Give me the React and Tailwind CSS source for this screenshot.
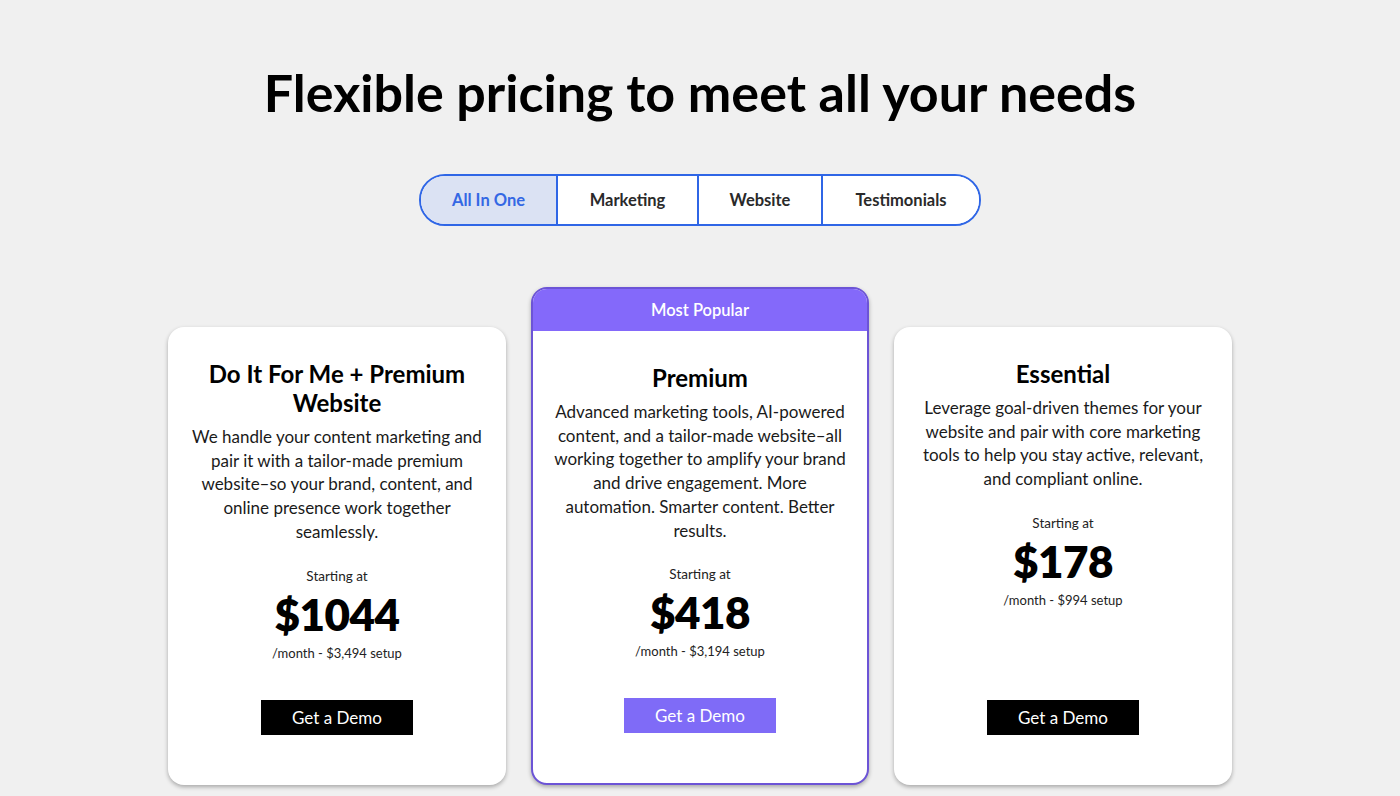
import React, { useState } from 'react';

const tabs = ['All In One', 'Marketing', 'Website', 'Testimonials'];

const plans = [
  {
    name: 'Do It For Me + Premium Website',
    desc: 'We handle your content marketing and pair it with a tailor-made premium website\u2013so your brand, content, and online presence work together seamlessly.',
    price: '$1044',
    setup: '/month - $3,494 setup',
  },
  {
    name: 'Premium',
    desc: 'Advanced marketing tools, AI-powered content, and a tailor-made website\u2013all working together to amplify your brand and drive engagement. More automation. Smarter content. Better results.',
    price: '$418',
    setup: '/month - $3,194 setup',
    popular: true,
  },
  {
    name: 'Essential',
    desc: 'Leverage goal-driven themes for your website and pair with core marketing tools to help you stay active, relevant, and compliant online.',
    price: '$178',
    setup: '/month - $994 setup',
  },
];

const widths = ['w-[135px]', 'w-[141px]', 'w-[124px]', 'w-[158px]'];

const CardBody = ({ plan }) => (
  <div className="flex flex-col items-center h-full px-5 pt-[32px] pb-[50px] text-center">
    <h3 className="text-[24px] leading-[29px] font-bold text-black">{plan.name}</h3>
    <p className="mt-[8px] text-[17px] leading-[23.7px] text-[#1a1a1a]">{plan.desc}</p>
    <div className="mt-[24px] text-[13.5px] leading-[16px] text-[#222]">Starting at</div>
    <div className="mt-[5px] text-[44px] leading-[50px] font-extrabold text-black tracking-[-0.5px]">{plan.price}</div>
    <div className="mt-[6px] text-[13px] leading-[16px] text-[#222]">{plan.setup}</div>
    <button
      className={`mt-auto w-[152px] h-[35px] text-[17px] text-white ${
        plan.popular ? 'bg-[#7f6bf7]' : 'bg-black'
      }`}
    >
      Get a Demo
    </button>
  </div>
);

const App = () => {
  const [active, setActive] = useState('All In One');

  return (
    <div className="min-h-screen bg-[#f0f0f0] font-['Lato',sans-serif] flex flex-col items-center overflow-hidden">
      <h1 className="mt-[63px] text-[52px] leading-[58px] font-bold text-black">
        Flexible pricing to meet all your needs
      </h1>

      <div className="mt-[53px] flex h-[52px] border-2 border-[#2f66e6] rounded-full overflow-hidden bg-white">
        {tabs.map((t, i) => (
          <button
            key={t}
            onClick={() => setActive(t)}
            className={`${widths[i]} h-full text-[16.5px] font-bold ${
              i > 0 ? 'border-l-2 border-[#2f66e6]' : ''
            } ${active === t ? 'bg-[#dbe2f3] text-[#3468e4]' : 'bg-white text-[#2a2a2a]'}`}
          >
            {t}
          </button>
        ))}
      </div>

      <div className="mt-[61px] flex items-end gap-[25px]">
        {plans.map((plan) =>
          plan.popular ? (
            <div
              key={plan.name}
              className="w-[338px] h-[498px] rounded-2xl border-2 border-[#6c54d6] bg-white overflow-hidden flex flex-col shadow-[0_2px_4px_rgba(0,0,0,0.3)]"
            >
              <div className="h-[42px] shrink-0 bg-[#8469fa] flex items-center justify-center text-white text-[16.5px] font-semibold">
                Most Popular
              </div>
              <div className="flex-1">
                <CardBody plan={plan} />
              </div>
            </div>
          ) : (
            <div
              key={plan.name}
              className="w-[338px] h-[458px] rounded-2xl bg-white shadow-[0_2px_4px_rgba(0,0,0,0.3)]"
            >
              <CardBody plan={plan} />
            </div>
          )
        )}
      </div>
    </div>
  );
};

export default App;
